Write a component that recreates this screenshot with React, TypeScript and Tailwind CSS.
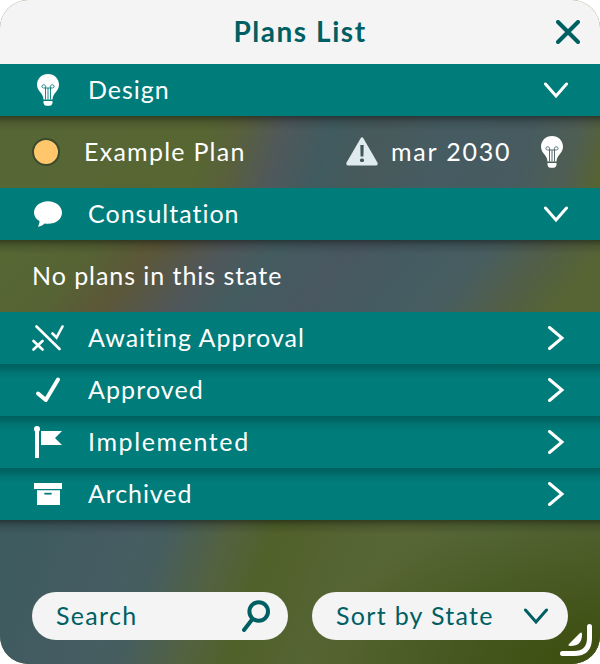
import type { ReactNode } from 'react';

const Bulb = ({ cut = '#007c7a' }: { cut?: string }) => (
  <svg width="24" height="32" viewBox="0 0 24 32" fill="none">
    <path d="M12 0C5.600 0 1 4.700 1 10.600c0 3.700 1.800 6 3.700 8.100 1.600 1.900 2.600 3.700 2.800 6.800h9c.2-3.100 1.200-4.900 2.800-6.800 1.900-2.100 3.700-4.400 3.700-8.100C23 4.700 18.400 0 12 0Z" fill="white" />
    <path d="M7.500 27h9v1.500c0 1.800-1.200 3.300-2.700 3.300h-3.600c-1.500 0-2.700-1.500-2.700-3.300Z" fill="white" />
    <path d="M9.500 25.500V14M12 25.500V14M14.500 25.500V14M8 14h8M9.500 14c.6-2-.3-3.200-1.700-3.200-2.500 0-2.500 3.200 0 3.200M14.500 14c-.6-2 .3-3.200 1.700-3.200 2.500 0 2.500 3.200 0 3.200" stroke={cut} strokeWidth=".9" />
  </svg>
);

const Bubble = () => (
  <svg width="28" height="28" viewBox="0 0 28 28">
    <path d="M14 1.200C6.300 1.200 0 6.200 0 12.500c0 3.600 2 6.700 5.500 8.500C5.500 23 4.800 25 4 26.700c3.100-.6 5.200-1.600 6.600-3.200 10 1.500 17.400-3.600 17.400-11C28 6.200 21.700 1.200 14 1.200Z" fill="white" />
  </svg>
);

const Awaiting = () => (
  <svg width="32" height="28" viewBox="0 0 32 28" fill="none" stroke="white" strokeWidth="2.600" strokeLinecap="round">
    <path d="M4.500 2.500 27.500 25M1.500 17 10.500 25.500M10.500 17 1.500 25.500M20.500 9.500l4 4L30.500 2.500" />
  </svg>
);

const Check = () => (
  <svg width="26" height="28" viewBox="0 0 26 28" fill="none" stroke="white" strokeWidth="4" strokeLinecap="round" strokeLinejoin="round">
    <path d="M3 17.500 10.800 24 23 3.500" />
  </svg>
);

const Flag = () => (
  <svg width="28" height="32" viewBox="0 0 28 32" fill="white">
    <circle cx="3" cy="3" r="3" />
    <path d="M1 3h4v29H1zM7 5h21l-7 7 7 7H7z" />
  </svg>
);

const Archive = () => (
  <svg width="28" height="22" viewBox="0 0 28 22" fill="white">
    <path d="M0 0h28v6H0zM3 7.200h23V22H3z" />
    <path d="M10.700 10.300h6.600v.8h-6.600z" fill="#007c7a" stroke="#007c7a" strokeLinejoin="round" />
  </svg>
);

const Chevron = ({ open }: { open?: boolean }) => (
  <svg className="shrink-0" width="24" height="24" viewBox="0 0 24 24" fill="none" stroke="currentColor" strokeWidth="3" strokeLinecap="round" strokeLinejoin="miter">
    <path d={open ? 'M1.500 6 12 18 22.500 6' : 'M5.500 1.500 18 12 5.500 22.500'} />
  </svg>
);

const Warning = () => (
  <svg width="32" height="30" viewBox="0 0 32 30">
    <path d="M14.500 1.500Q16-.8 17.500 1.500L31.400 25.500Q32.500 28.500 29.500 28.500H2.500Q-.5 28.500 .6 25.500Z" fill="#e0ebed" />
    <path d="M14.300 8h3.400l-.3 11.500h-2.800z" fill="#3f575b" />
    <rect x="14" y="21.500" width="4" height="3.600" rx="1.500" fill="#3f575b" />
  </svg>
);

type SectionProps = { icon: ReactNode; label: string; tracking: string; open?: boolean; shaded?: boolean };

const Section = ({ icon, label, tracking, open, shaded }: SectionProps) => (
  <button
    className={`flex h-[52px] w-full shrink-0 items-center bg-[#007c7a] pr-8 pl-8 text-left text-white ${
      shaded ? 'bg-[linear-gradient(180deg,#005f5e_0px,#006765_4px,#007573_9px,#007c7a_15px)]' : ''
    }`}
  >
    <span className="flex w-8 justify-center">{icon}</span>
    <span className={`ml-6 flex-1 pb-0.5 whitespace-nowrap ${tracking}`}>{label}</span>
    <Chevron open={open} />
  </button>
);

export default function App() {
  return (
    <div className="flex h-[664px] w-[600px] flex-col overflow-hidden rounded-[28px] bg-[#566433] font-['Lato','Open_Sans',sans-serif] text-[25px] leading-8 text-white">
      <header className="flex h-16 shrink-0 items-center bg-[#f4f4f4] pr-5 pl-11 text-[#005f63]">
        <h1 className="flex-1 pb-0.5 text-center text-[28px] font-bold tracking-[1.550px]">Plans List</h1>
        <svg width="24" height="24" viewBox="0 0 24 24" stroke="currentColor" strokeWidth="4" strokeLinecap="round">
          <path d="M2 2 22 22M22 2 2 22" />
        </svg>
      </header>

      <Section icon={<Bulb />} label="Design" tracking="tracking-[1px]" open />
      <div className="flex h-[72px] shrink-0 items-center bg-[linear-gradient(180deg,#0006,#0002_6px,#0000_14px),linear-gradient(106deg,#566635_0%,#576633_34%,#59603b_39%,#50585a_46%,#405b60_54%,#48595a_62%,#455c62_72%,#475b60_86%,#4f5e53_94%,#57642e_100%)] px-8">
        <span className="size-7 rounded-full border-2 border-[#3c4a2c] bg-[#ffc66b]" />
        <span className="ml-6 flex-1 pb-0.5 tracking-[1.250px]">Example Plan</span>
        <Warning />
        <span className="ml-[13px] w-[121px] pb-0.5 whitespace-nowrap tracking-[1.800px]">mar 2030</span>
        <span className="ml-6 flex w-8 justify-center"><Bulb cut="#455c62" /></span>
      </div>

      <Section icon={<Bubble />} label="Consultation" tracking="tracking-[1px]" open />
      <div className="flex h-[72px] shrink-0 items-center bg-[linear-gradient(180deg,#0006,#0002_6px,#0000_14px),linear-gradient(130deg,#566834_0%,#566334_15%,#5c5738_24%,#50575a_35%,#435c60_43%,#495761_54%,#445c62_66%,#475d60_75%,#515e48_84%,#566533_93%)] px-8">
        <span className="pb-0.5 tracking-[.95px]">No plans in this state</span>
      </div>

      <Section icon={<Awaiting />} label="Awaiting Approval" tracking="tracking-[1px]" />
      <Section icon={<Check />} label="Approved" tracking="tracking-[1.100px]" shaded />
      <Section icon={<Flag />} label="Implemented" tracking="tracking-[1.600px]" shaded />
      <Section icon={<Archive />} label="Archived" tracking="tracking-[.9px]" shaded />

      <footer className="relative flex flex-1 items-end gap-6 bg-[linear-gradient(180deg,#0006,#0002_6px,#0000_14px),radial-gradient(ellipse_300px_150px_at_100%_100%,#3e5012_15%,#3e501200_100%),linear-gradient(110deg,#3e5b5f_4%,#455c62_19%,#465d5f_26%,#53623f_36%,#506129_43%,#546332_52%,#576635_60%,#536535_78%,#506030_100%)] px-8 pb-6 text-[#005f63]">
        <label className="flex h-12 w-64 items-center rounded-full bg-[#f4f4f4] pr-4 pl-6">
          <span className="flex-1 pb-0.5 tracking-[1.300px]">Search</span>
          <svg width="32" height="32" viewBox="0 0 32 32" fill="none" stroke="currentColor" strokeWidth="4" strokeLinecap="round">
            <circle cx="18.700" cy="11.500" r="9.300" />
            <path d="M12.500 19 4 30" />
          </svg>
        </label>
        <button className="flex h-12 w-64 items-center rounded-full bg-[#f4f4f4] pr-5 pl-6 text-left">
          <span className="flex-1 pb-0.5 whitespace-nowrap tracking-[1.300px]">Sort by State</span>
          <Chevron open />
        </button>
        <svg className="absolute right-2 bottom-2" width="32" height="32" viewBox="0 0 32 32" fill="none">
          <path d="M29.500 2.500V14Q29.500 29.500 14 29.500H2.500" stroke="white" strokeWidth="5" strokeLinecap="round" />
          <path d="M19.500 9.500Q22 7 22 10.500 22 22 10.500 22 7 22 9.500 19.500Z" fill="white" />
        </svg>
      </footer>
    </div>
  );
}
